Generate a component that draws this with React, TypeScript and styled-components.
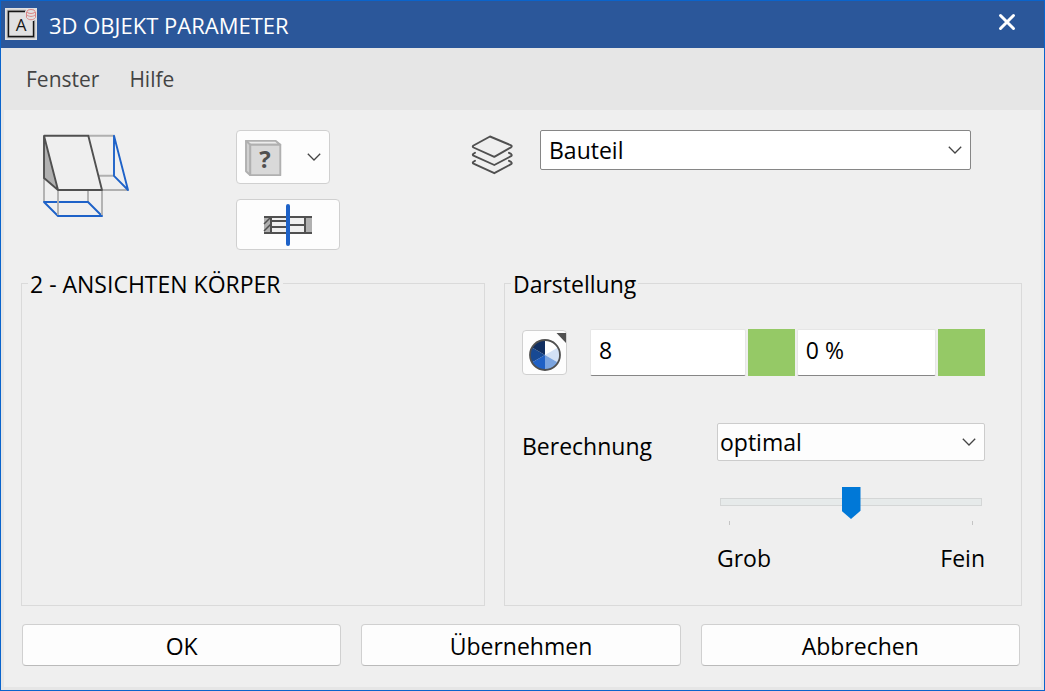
import React from 'react';
import styled, { createGlobalStyle } from 'styled-components';

const GlobalStyle = createGlobalStyle`
  *, *::before, *::after { box-sizing: border-box; }
  body {
    margin: 0;
    background: #efefef;
    color: #000;
    font-family: "Open Sans", "Noto Sans", sans-serif;
    font-size: 23px;
    line-height: 30px;
  }
  button, input, select { font: inherit; color: inherit; margin: 0; }
`;

const Dialog = styled.main`
  display: flex;
  flex-direction: column;
  min-height: 100vh;
  border: 1px solid #0a64cc;
  background: #e6e6e6;
`;

const TitleBar = styled.header`
  display: flex;
  align-items: center;
  gap: 12px;
  height: 47px;
  padding: 0 20px 2px 4px;
  background: #2b579a;
  color: #fff;
`;

const Title = styled.h1`
  flex: 1;
  margin: 0;
  padding-top: 2px;
  font-size: 22px;
  line-height: 30px;
  font-weight: 400;
`;

const CloseButton = styled.button`
  display: grid;
  place-items: center;
  width: 34px;
  height: 34px;
  padding: 0 0 4px;
  border: 0;
  background: transparent;
`;

const MenuBar = styled.nav`
  display: flex;
  align-items: center;
  gap: 30px;
  height: 62px;
  padding: 0 25px;
`;

const MenuItem = styled.button`
  padding: 0;
  border: 0;
  background: transparent;
  color: #444;
  font-size: 21px;
`;

const Body = styled.div`
  flex: 1;
  display: flex;
  flex-direction: column;
  margin: 0 3px 3px;
  padding: 20px 19px 21px 17px;
  background: #efefef;
`;

const TopRow = styled.section`
  display: flex;
  align-items: flex-start;
  padding: 0 51px 0 20px;
`;

const ShapePreview = styled.div`
  width: 195px;
  padding-top: 3px;
`;

const ToolColumn = styled.div`
  display: flex;
  flex-direction: column;
  align-items: flex-start;
  gap: 15px;
  width: 234px;
`;

const ToolButton = styled.button<{ $width: number; $height: number }>`
  display: flex;
  align-items: center;
  justify-content: center;
  width: ${(p) => p.$width}px;
  height: ${(p) => p.$height}px;
  padding: 0;
  border: 1px solid #d0d0d0;
  border-radius: 4px;
  background: #fdfdfd;
`;

const DropDownButton = styled(ToolButton)`
  justify-content: space-between;
  padding: 0 8px;
`;

const LayerField = styled.div`
  flex: 1;
  display: flex;
  align-items: flex-start;
  gap: 26px;
`;

const LayerLabel = styled.label`
  padding-top: 4px;
`;

const SelectBox = styled.div`
  display: grid;
  flex: 1;
  align-items: center;
  & > * { grid-area: 1 / 1; }
  & > svg { justify-self: end; margin-right: 9px; pointer-events: none; }
`;

const Select = styled.select<{ $strong?: boolean }>`
  appearance: none;
  width: 100%;
  height: ${(p) => (p.$strong ? 40 : 38)}px;
  padding: 0 32px 0 ${(p) => (p.$strong ? 8 : 2)}px;
  border: 1px solid ${(p) => (p.$strong ? '#868686' : '#cccccc')};
  border-radius: 2px;
  background: ${(p) => (p.$strong ? '#fff' : '#fdfdfd')};
`;

const Groups = styled.div`
  flex: 1;
  display: grid;
  grid-template-columns: 464fr 518fr;
  gap: 19px;
  margin-top: 17px;
`;

const Group = styled.fieldset`
  min-width: 0;
  margin: 0;
  padding: 0 36px 0 17px;
  border: 1px solid #dadada;
`;

const Legend = styled.legend`
  margin-left: -11px;
  padding: 2px 2px 0;
`;

const FillRow = styled.div`
  display: flex;
  align-items: center;
  gap: 2px;
  margin-top: 30px;
`;

const FillButton = styled(ToolButton)`
  flex: none;
  margin-right: 21px;
`;

const ValueInput = styled.input<{ $grow: number }>`
  flex: ${(p) => p.$grow} 1 0;
  min-width: 0;
  height: 47px;
  padding: 0 8px 6px;
  border: 1px solid #e6e6e6;
  border-bottom-color: #868686;
  border-radius: 2px;
  background: #fff;
`;

const Swatch = styled.button`
  flex: none;
  width: 47px;
  height: 47px;
  padding: 0;
  border: 0;
  background: #95c966;
`;

const CalcRow = styled.div`
  display: grid;
  grid-template-columns: 1fr 268px;
  align-items: center;
  margin-top: 47px;
`;

const CalcLabel = styled.label`
  padding-top: 8px;
`;

const SliderArea = styled.div`
  width: 268px;
  margin: 25px 0 0 auto;
`;

const Slider = styled.input`
  appearance: none;
  display: block;
  width: 262px;
  height: 32px;
  margin: 0 3px;
  background: transparent;
  &::-webkit-slider-runnable-track {
    height: 8px;
    border: 1px solid #d4d6d6;
    background: #e6eaea;
  }
  &::-webkit-slider-thumb {
    appearance: none;
    width: 19px;
    height: 32px;
    margin-top: -12px;
    background: #0078d7;
    clip-path: polygon(0 0, 100% 0, 100% 74%, 50% 100%, 0 74%);
  }
`;

const Ticks = styled.div`
  display: flex;
  justify-content: space-between;
  height: 4px;
  margin: 3px 12px 0;
  border: solid #c4c4c4;
  border-width: 0 1px;
`;

const Scale = styled.div`
  display: flex;
  justify-content: space-between;
  margin-top: 18px;
`;

const Actions = styled.footer`
  display: grid;
  grid-template-columns: repeat(3, 1fr);
  gap: 20px;
  margin-top: 18px;
  padding: 0 2px 0 1px;
`;

const ActionButton = styled.button`
  height: 42px;
  padding: 2px 0 0;
  border: 1px solid #d0d0d0;
  border-bottom-color: #bababa;
  border-radius: 4px;
  background: #fdfdfd;
`;

const Chevron = () => (
  <svg width="14" height="10" viewBox="0 0 14 10" fill="none" stroke="#444" strokeWidth="1.3" aria-hidden="true">
    <path d="M.8 1.8 7 8l6.2-6.2" />
  </svg>
);

const AppLogo = () => (
  <svg width="32" height="32" viewBox="0 0 32 32" aria-hidden="true">
    <path fill="#e1e1e1" d="M0 0h32v32H0z" />
    <path d="M2.5 2.5h27v27h-27z" fill="none" stroke="#aaa" strokeWidth="1.5" />
    <path d="M20 3.5H3.5v25h25V13" fill="none" stroke="#151515" strokeWidth="1.4" />
    <path fill="#e1e1e1" d="M21 0h11v12H21z" />
    <text x="16" y="23" textAnchor="middle" fontSize="17" fontFamily="Open Sans, sans-serif" fill="#151515">A</text>
    <g fill="none" stroke="#dc8585" strokeWidth="1">
      <ellipse cx="26" cy="3.5" rx="4" ry="2" />
      <path d="M21.5 4v5.5c2 3 7 3 9 0V4M21.5 6.5c2 2.5 7 2.5 9 0" />
    </g>
  </svg>
);

const ViewsDrawing = () => (
  <svg width="90" height="86" viewBox="41 133 90 86" fill="none" strokeWidth="1.9" aria-hidden="true">
    <path stroke="#b0b0b0" d="M88 135.8h26M99 175.8h15M102 190h26M44 178v24M88 190v12" />
    <path stroke="#1e62c8" strokeLinejoin="round" d="M114 135.8v40L128 190zM44 202h44l14 14H58z" />
    <path stroke="#b0b0b0" d="M58 190v25M102 190v25" />
    <path fill="#b0b0b0" d="M44 136v42l14 12z" />
    <path stroke="#505050" strokeLinejoin="round" d="M44 135.8h44.3L102 190H58zM44 135.8V178l14 12" />
  </svg>
);

const CubeIcon = () => (
  <svg width="37" height="37" viewBox="245 138 37 37" aria-hidden="true">
    <g stroke="#b0b0b0" strokeWidth="1.9" strokeLinejoin="round">
      <path fill="#ececec" d="m246 139.900 4.300 3.800h30l-4.500-3.800z" />
      <path fill="#d0d0d0" d="M246 139.900v30.300l4.300 4.100v-30.600z" />
      <path fill="#d9d9d9" d="M250.300 143.700h30v30.600h-30z" />
    </g>
    <text x="265" y="167" textAnchor="middle" fontFamily="Open Sans, sans-serif" fontWeight="700" fontSize="24" fill="#505050">?</text>
  </svg>
);

const SectionIcon = () => (
  <svg width="50" height="42" viewBox="263 204 50 42" fill="none" aria-hidden="true">
    <path fill="#efefef" d="M271 217h35v16h-35z" />
    <path fill="#b0b0b0" d="M264 217h7v16h-7zM306 217h6v16h-6z" />
    <path stroke="#505050" strokeWidth="2" d="M264 217h48M264 233h48M271 217v16M305 217v16M271 221h17M271 227h17M288 225h17" />
    <path stroke="#505050" strokeWidth="1.500" d="m264 224 6-6M264 231l7-7" />
    <path stroke="#1e62c8" strokeWidth="4" strokeLinecap="round" d="M288 206v38" />
  </svg>
);

const LayersIcon = () => (
  <svg width="44" height="42" viewBox="470 134 44 42" fill="none" stroke="#505050" strokeWidth="1.900" strokeLinejoin="round" strokeLinecap="round" role="img" aria-label="Layer">
    <path d="M490 136.500 511 145.300q1.500 1 0 2L494.300 156.800 473.500 147.500q-1.500-1 0-2z" />
    <path d="m475 152.800-1.500.9q-1.500 1 0 2l20.800 9.300 16.700-8.800q1.500-1 0-2.300l-2-1.100" />
    <path d="m475 160.800-1.500.9q-1.500 1 0 2l20.800 9.500 16.700-9q1.500-1 0-2.300l-2-1.100" />
  </svg>
);

const PIE_COLORS = ['#ffffff', '#d3e1f5', '#7ba4df', '#1f60c5', '#174993', '#112f61'];

const PieIcon = () => {
  const point = (step: number) => {
    const angle = (step * Math.PI) / 3;
    return `${22 + 15 * Math.sin(angle)} ${24 - 15 * Math.cos(angle)}`;
  };
  return (
    <svg width="43" height="43" viewBox="0 0 43 43" aria-hidden="true">
      {PIE_COLORS.map((color, i) => (
        <path key={color} fill={color} d={`M22 24L${point(i)}A15 15 0 0 1 ${point(i + 1)}Z`} />
      ))}
      <circle cx="22" cy="24" r="15" fill="none" stroke="#505050" strokeWidth="1.8" />
      <path fill="#505050" d="M33.500 2H43v10z" />
    </svg>
  );
};

export default function App() {
  return (
    <>
      <GlobalStyle />
      <Dialog>
        <TitleBar>
          <AppLogo />
          <Title>3D OBJEKT PARAMETER</Title>
          <CloseButton type="button" aria-label="Schließen">
            <svg width="18" height="18" viewBox="0 0 18 18" stroke="#fff" strokeWidth="3" strokeLinecap="round" aria-hidden="true">
              <path d="m2.500 2.500 13 13m0-13-13 13" />
            </svg>
          </CloseButton>
        </TitleBar>
        <MenuBar>
          <MenuItem type="button">Fenster</MenuItem>
          <MenuItem type="button">Hilfe</MenuItem>
        </MenuBar>
        <Body>
          <TopRow>
            <ShapePreview>
              <ViewsDrawing />
            </ShapePreview>
            <ToolColumn>
              <DropDownButton type="button" $width={94} $height={54} aria-label="Objekttyp">
                <CubeIcon />
                <Chevron />
              </DropDownButton>
              <ToolButton type="button" $width={104} $height={51} aria-label="Schnitt">
                <SectionIcon />
              </ToolButton>
            </ToolColumn>
            <LayerField>
              <LayerLabel htmlFor="layer">
                <LayersIcon />
              </LayerLabel>
              <SelectBox>
                <Select id="layer" $strong defaultValue="Bauteil">
                  <option>Bauteil</option>
                </Select>
                <Chevron />
              </SelectBox>
            </LayerField>
          </TopRow>
          <Groups>
            <Group>
              <Legend>2 - ANSICHTEN KÖRPER</Legend>
            </Group>
            <Group>
              <Legend>Darstellung</Legend>
              <FillRow>
                <FillButton type="button" $width={45} $height={45} aria-label="Farbe">
                  <PieIcon />
                </FillButton>
                <ValueInput $grow={157} defaultValue="8" aria-label="Farbnummer" />
                <Swatch type="button" aria-label="Farbe wählen" />
                <ValueInput $grow={138} defaultValue="0 %" aria-label="Transparenz" />
                <Swatch type="button" aria-label="Transparenz wählen" />
              </FillRow>
              <CalcRow>
                <CalcLabel htmlFor="calc">Berechnung</CalcLabel>
                <SelectBox>
                  <Select id="calc" defaultValue="optimal">
                    <option>optimal</option>
                  </Select>
                  <Chevron />
                </SelectBox>
              </CalcRow>
              <SliderArea>
                <Slider type="range" min={0} max={100} defaultValue={50} aria-label="Genauigkeit" />
                <Ticks />
                <Scale>
                  <span>Grob</span>
                  <span>Fein</span>
                </Scale>
              </SliderArea>
            </Group>
          </Groups>
          <Actions>
            <ActionButton type="button">OK</ActionButton>
            <ActionButton type="button">Übernehmen</ActionButton>
            <ActionButton type="button">Abbrechen</ActionButton>
          </Actions>
        </Body>
      </Dialog>
    </>
  );
}
